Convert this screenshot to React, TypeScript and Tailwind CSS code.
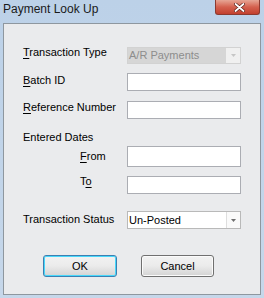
import React from 'react';

const font = "font-['Liberation_Sans',Arial,sans-serif]";

function TextBox({ tall = false }: { tall?: boolean }) {
    return <div className={`w-[114px] ${tall ? 'h-[21px]' : 'h-[18px]'} bg-white border border-[#abadb3]`} />;
}

function Arrow({ color }: { color: string }) {
    return (
        <svg width="5" height="3" viewBox="0 0 5 3">
            <path d="M0 0h5L2.5 3z" fill={color} />
        </svg>
    );
}

function Combo({ value, disabled = false }: { value: string; disabled?: boolean }) {
    return (
        <div className={`w-[114px] flex border ${disabled ? 'h-[17px] border-[#d2d2d2] bg-[#d6d6d6]' : 'h-[18px] border-[#b9b9b9] bg-white'}`}>
            <div className={`flex-1 flex items-center pl-px text-[11px] leading-[13px] ${disabled ? 'text-[#8d8d8d]' : 'text-black'}`}>{value}</div>
            <div className={`w-[14px] flex items-center justify-center ${disabled ? 'bg-[#f0f0f0]' : 'bg-[#fafafa] border-l border-[#dedede]'}`}>
                <Arrow color={disabled ? '#c6c6c6' : '#6e6e6e'} />
            </div>
        </div>
    );
}

function Row({ label, labelClass, children, mt }: { label: React.ReactNode; labelClass: string; children: React.ReactNode; mt: string }) {
    return (
        <div className={`flex items-start ${mt}`}>
            <div className={`w-[104px] text-[11px] leading-[13px] text-black ${labelClass}`}>{label}</div>
            {children}
        </div>
    );
}

function U({ children }: { children: React.ReactNode }) {
    return <span className="underline underline-offset-2">{children}</span>;
}

export default function App() {
    return (
        <div className={`w-[264px] h-[298px] bg-gradient-to-b from-[#bcd1e8] to-[#c6d7ea] flex flex-col ${font}`}>
            <div className="h-[23px] flex items-start justify-between shrink-0">
                <div className="pl-[3px] pt-[2px] text-[12px] leading-[14px] text-[#1a1a1a]">Payment Look Up</div>
                <div className="mr-[4px] w-[45px] h-[15px] rounded-b-[3px] border border-t-0 border-[#8c3a30] bg-gradient-to-b from-[#e6a595] via-[#d4604e] to-[#c2402f] flex items-center justify-center">
                    <svg width="11" height="9" viewBox="0 0 11 9" className="ml-[3px]">
                        <path d="M1.5 1l8 7M9.5 1l-8 7" stroke="#5a1f18" strokeWidth="3.2" strokeLinecap="round" />
                        <path d="M1.5 1l8 7M9.5 1l-8 7" stroke="#ffffff" strokeWidth="1.8" strokeLinecap="round" />
                    </svg>
                </div>
            </div>
            <div className="mx-[3px] mb-[3px] flex-1 border border-[#8e979f] bg-[#eaebed] pl-[19px] flex flex-col">
                <Row mt="mt-[23px]" labelClass="-mt-px" label={<><U>T</U>ransaction Type</>}>
                    <Combo value="A/R Payments" disabled />
                </Row>
                <Row mt="mt-[9px]" labelClass="pt-px" label={<><U>B</U>atch ID</>}>
                    <TextBox />
                </Row>
                <Row mt="mt-[10px]" labelClass="" label={<><U>R</U>eference Number</>}>
                    <TextBox />
                </Row>
                <div className="mt-[12px] h-[14px] text-[11px] leading-[13px] text-black">Entered Dates</div>
                <Row mt="mt-px" labelClass="pt-[4px] pl-[57px]" label={<><U>F</U>rom</>}>
                    <TextBox tall />
                </Row>
                <Row mt="mt-[9px]" labelClass="-mt-px pl-[57px]" label={<>T<U>o</U></>}>
                    <TextBox />
                </Row>
                <Row mt="mt-[17px]" labelClass="pt-[2px]" label="Transaction Status">
                    <Combo value="Un-Posted" />
                </Row>
                <div className="mt-[26px] flex gap-[24px] pl-[20px]">
                    <button className="w-[74px] h-[22px] rounded-[3px] border border-[#3c7fb1] shadow-[inset_0_0_0_1px_#48d8fb] bg-gradient-to-b from-[#f2f2f2] via-[#ebebeb] to-[#d3d3d3] text-[11px] leading-[13px] text-black">OK</button>
                    <button className="w-[73px] h-[22px] rounded-[3px] border border-[#707070] shadow-[inset_0_0_0_1px_#fbfbfb] bg-gradient-to-b from-[#f2f2f2] via-[#ebebeb] to-[#d3d3d3] text-[11px] leading-[13px] text-black">Cancel</button>
                </div>
            </div>
        </div>
    );
}
